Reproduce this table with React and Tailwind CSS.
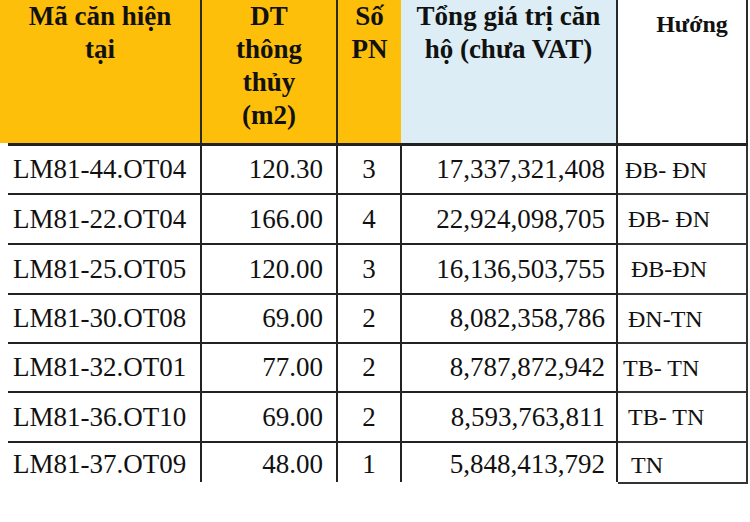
import React from 'react';

const rows = [
  { code: 'LM81-44.OT04', area: '120.30', pn: '3', price: '17,337,321,408', dir: 'ĐB- ĐN', h: 'h-[49px]', pad: 'pl-[7px]' },
  { code: 'LM81-22.OT04', area: '166.00', pn: '4', price: '22,924,098,705', dir: 'ĐB- ĐN', h: 'h-[50px]', pad: 'pl-[10px]' },
  { code: 'LM81-25.OT05', area: '120.00', pn: '3', price: '16,136,503,755', dir: 'ĐB-ĐN', h: 'h-[50px]', pad: 'pl-[13px]' },
  { code: 'LM81-30.OT08', area: '69.00', pn: '2', price: '8,082,358,786', dir: 'ĐN-TN', h: 'h-[49px]', pad: 'pl-[10px]' },
  { code: 'LM81-32.OT01', area: '77.00', pn: '2', price: '8,787,872,942', dir: 'TB- TN', h: 'h-[49px]', pad: 'pl-[5px]' },
  { code: 'LM81-36.OT10', area: '69.00', pn: '2', price: '8,593,763,811', dir: 'TB- TN', h: 'h-[50px]', pad: 'pl-[10px]' },
];

const last = { code: 'LM81-37.OT09', area: '48.00', pn: '1', price: '5,848,413,792', dir: 'TN' };

const App = () => {
  return (
    <div className="w-[750px] h-[522px] bg-white overflow-hidden text-[#111] [font-family:'Liberation_Serif','Times_New_Roman',serif]">
      {/* Header */}
      <div className="flex h-[143px] font-bold text-[27px] leading-[33px]">
        <div className="w-[202px] bg-[#fdbf0a] border-r-2 border-[#2a2a2a] text-center">
          Mã căn hiện<br />tại
        </div>
        <div className="w-[136px] bg-[#fdbf0a] border-r-2 border-[#2a2a2a] text-center">
          DT<br />thông<br />thủy<br />(m2)
        </div>
        <div className="w-[63px] bg-[#fdbf0a] text-center">
          Số<br />PN
        </div>
        <div className="w-[217px] bg-[#dcedf5] border-r-2 border-[#2a2a2a] text-center">
          Tổng giá trị căn<br />hộ (chưa VAT)
        </div>
        <div className="w-[130px] bg-white border-r-2 border-[#2a2a2a] pt-2 pl-5 text-center text-[24px]">
          Hướng
        </div>
      </div>
      <div className="ml-2 w-[740px] h-[3px] bg-[#222]" />

      {/* Data rows */}
      {rows.map((r) => (
        <div key={r.code} className={`flex ${r.h} text-[27px]`}>
          <div className="ml-2 w-[194px] border-r-2 border-b-2 border-[#222] flex items-center pl-[5px]">
            {r.code}
          </div>
          <div className="w-[136px] border-r-2 border-b-2 border-[#222] flex items-center justify-end pr-[13px]">
            {r.area}
          </div>
          <div className="w-[64px] border-r-2 border-b-2 border-[#222] flex items-center justify-center">
            {r.pn}
          </div>
          <div className="w-[216px] border-r-2 border-b-2 border-[#222] flex items-center justify-end pr-[11px]">
            {r.price}
          </div>
          <div className={`w-[130px] border-r-2 border-b-2 border-[#333] flex items-center text-[24px] ${r.pad}`}>
            {r.dir}
          </div>
        </div>
      ))}

      {/* Last row */}
      <div className="flex h-[41px] text-[27px] items-start">
        <div className="ml-2 w-[194px] h-[39px] border-r-2 border-[#222] flex items-center pl-[5px] pt-1">
          {last.code}
        </div>
        <div className="w-[136px] h-[39px] border-r-2 border-[#222] flex items-center justify-end pr-[13px] pt-1">
          {last.area}
        </div>
        <div className="w-[64px] h-[39px] border-r-2 border-[#222] flex items-center justify-center pt-1">
          {last.pn}
        </div>
        <div className="w-[216px] h-[39px] border-r-2 border-[#222] flex items-center justify-end pr-[11px] pt-1">
          {last.price}
        </div>
        <div className="w-[130px] h-[41px] border-r-2 border-b-2 border-[#333] flex items-center text-[24px] pl-[13px] pt-1">
          {last.dir}
        </div>
      </div>
    </div>
  );
};

export default App;
